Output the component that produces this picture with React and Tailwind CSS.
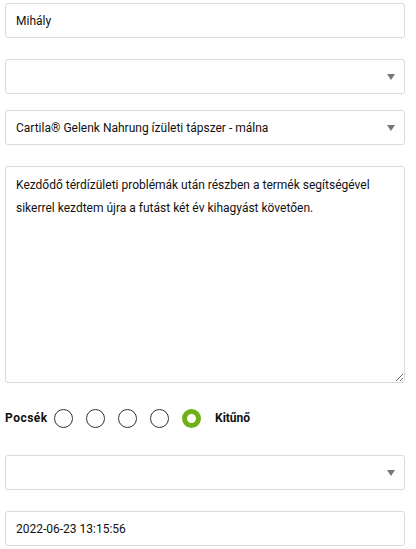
import { useState } from "react";

const FIELD = "block w-full h-[35px] rounded-[3px] border border-[#dadada] bg-white px-[10px] text-[12px] text-[#111] outline-none";

function Caret() {
    return (
        <svg width="8" height="6" viewBox="0 0 8 6" className="absolute right-[10px] top-[15px]">
            <path d="M0 0 H8 L4 6 Z" fill="#777" />
        </svg>
    );
}

function Select({ value }) {
    return (
        <div className="relative">
            <div className={FIELD + " flex items-center"}>{value}</div>
            <Caret />
        </div>
    );
}

export default function App() {
    const [rating, setRating] = useState(4);

    return (
        <div
            className="w-[400px] ml-[5px] pt-[3px] bg-white"
            style={{ fontFamily: "Roboto, 'Liberation Sans', sans-serif" }}
        >
            {/* NAME */}
            <input className={FIELD} defaultValue="Mihály" />

            {/* EMPTY SELECT */}
            <div className="mt-[21px]">
                <Select value="" />
            </div>

            {/* PRODUCT */}
            <div className="mt-[16px]">
                <Select value="Cartila® Gelenk Nahrung ízületi tápszer - málna" />
            </div>

            {/* REVIEW */}
            <textarea
                className="mt-[21px] block w-full h-[217px] rounded-[3px] border border-[#dadada] bg-white px-[10px] py-[7px] text-[12px] leading-[23px] text-[#111] outline-none"
                defaultValue="Kezdődő térdízületi problémák után részben a termék segítségével sikerrel kezdtem újra a futást két év kihagyást követően."
            />

            {/* RATING */}
            <div className="mt-[25px] flex items-center h-[20px] text-[12px] font-bold text-[#111]">
                <span className="w-[43px] tracking-[0.5px]">Pocsék</span>
                <div className="ml-[6px] flex items-center gap-[13px]">
                    {[0, 1, 2, 3, 4].map((i) =>
                        i === rating ? (
                            <button
                                key={i}
                                onClick={() => setRating(i)}
                                className="w-[19px] h-[19px] rounded-full border-[5px] border-[#6fb01b]"
                            />
                        ) : (
                            <button
                                key={i}
                                onClick={() => setRating(i)}
                                className="w-[19px] h-[19px] rounded-full border border-[#333]"
                            />
                        )
                    )}
                </div>
                <span className="ml-[14px]">Kitűnő</span>
            </div>

            {/* EMPTY SELECT */}
            <div className="mt-[27px]">
                <Select value="" />
            </div>

            {/* DATE */}
            <input className={FIELD + " mt-[21px]"} defaultValue="2022-06-23 13:15:56" />
        </div>
    );
}
